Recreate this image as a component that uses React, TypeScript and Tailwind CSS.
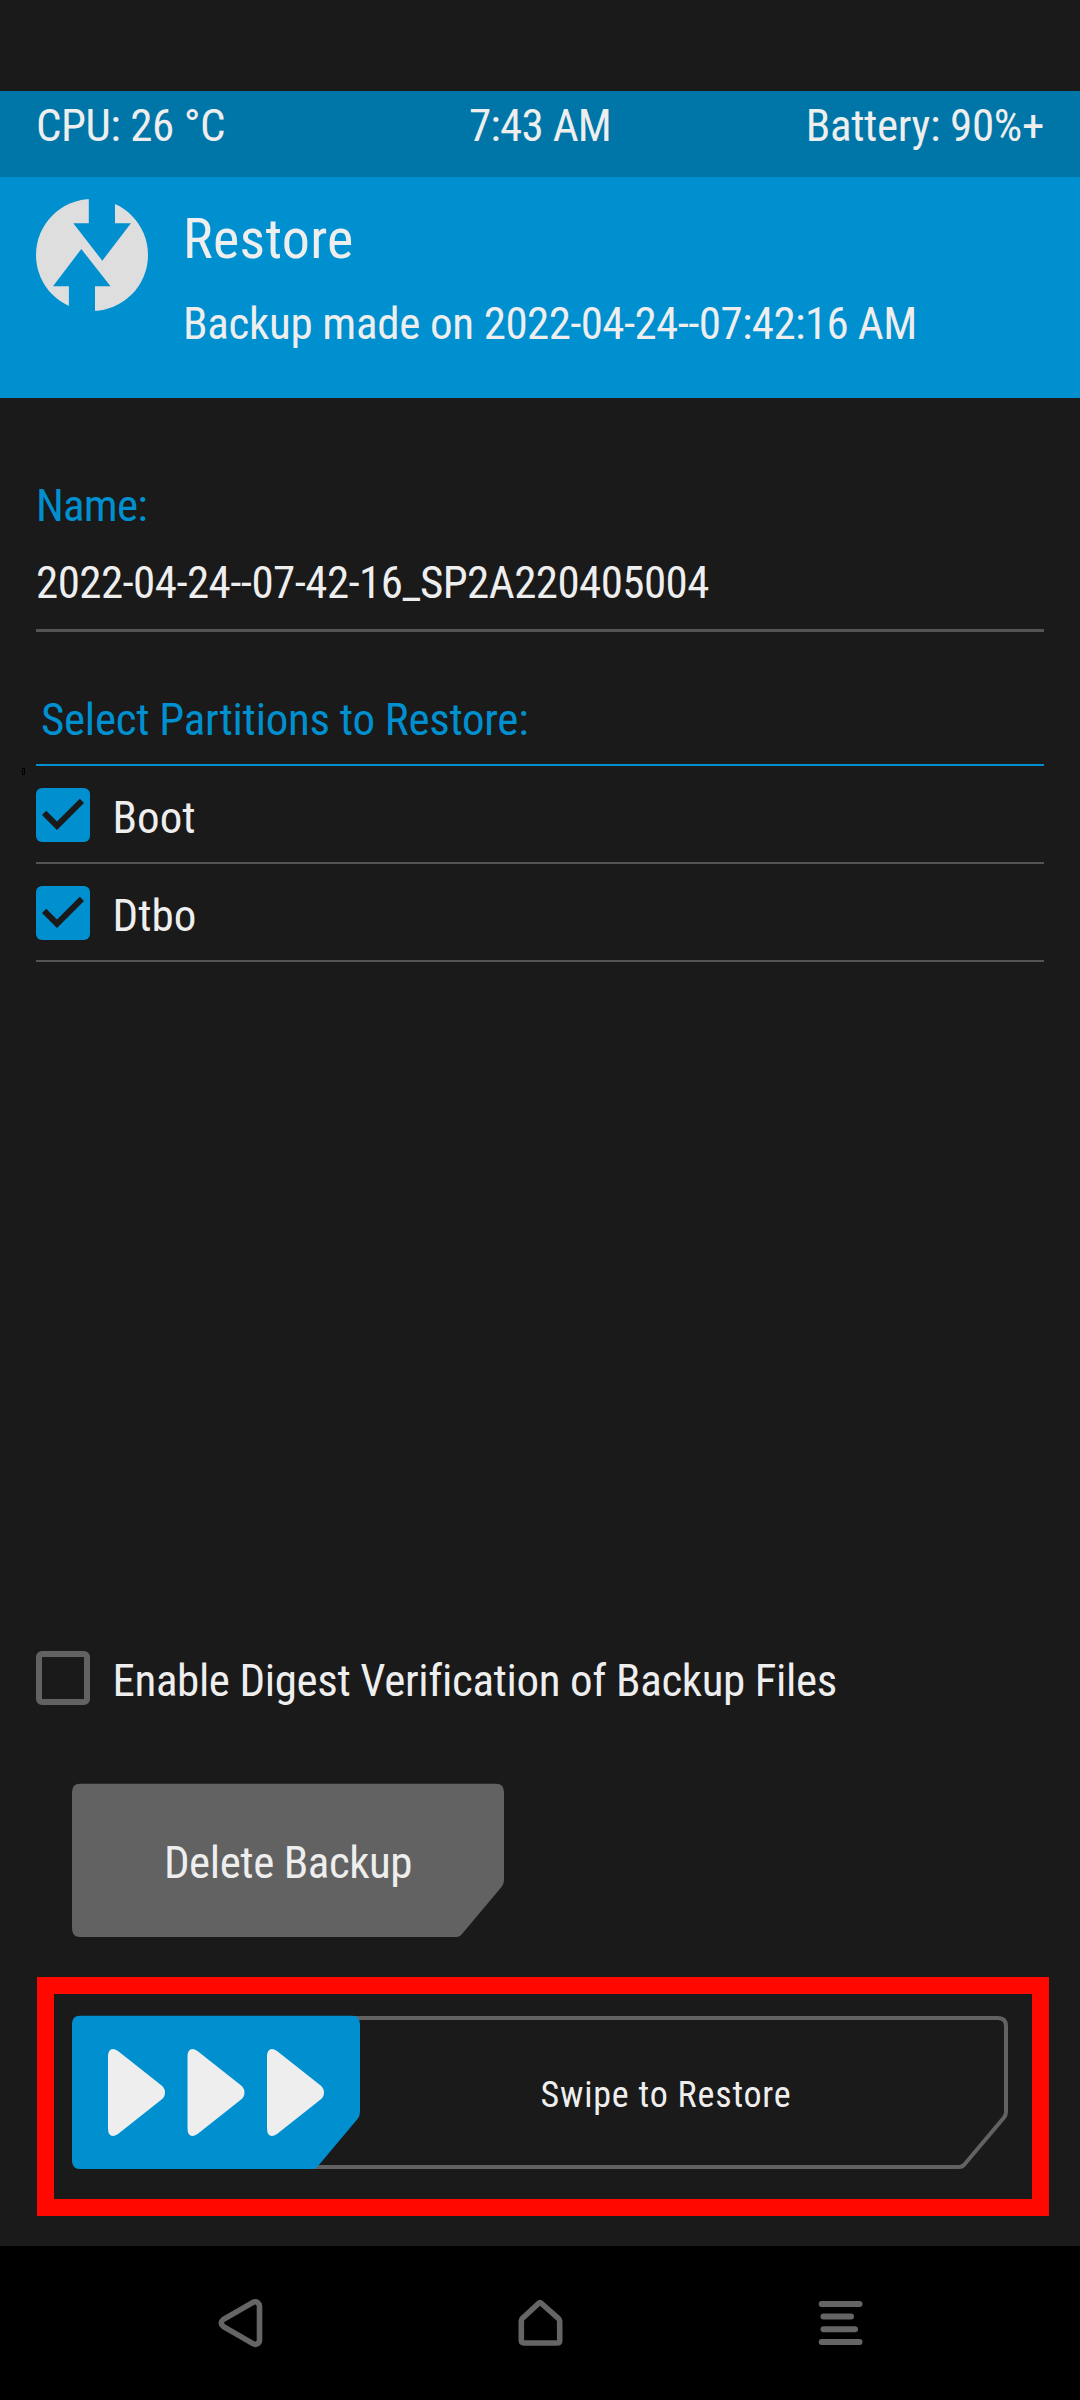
import type { ReactNode } from "react";

function StatusBar() {
  return (
    <div className="flex h-[86px] items-start justify-between bg-[#0076a8] px-9 pt-2 leading-[53px]">
      <span className="w-1/3 tracking-[-0.45px]">CPU: 26 °C</span>
      <span className="tracking-[-0.75px]">7:43 AM</span>
      <span className="w-1/3 text-right tracking-[-0.35px]">Battery: 90%+</span>
    </div>
  );
}

function Logo() {
  return (
    <svg className="mt-[22px] h-28 w-28 shrink-0" viewBox="0 0 112 112">
      <circle cx="56" cy="56" r="56" fill="#dedede" />
      <path
        fill="#0090d0"
        d="M52.8 -1V24.3H37.3L66.3 61.7L94.9 24.3H79V-1ZM32.9 113V87.3H17L45.3 50L74.5 87.3H59V113Z"
      />
    </svg>
  );
}

function Header() {
  return (
    <header className="flex h-[221px] gap-[35px] bg-[#0090d0] px-9">
      <Logo />
      <div className="flex flex-col">
        <h1 className="mt-[29px] text-[56px] leading-[66px] tracking-[0.3px]">Restore</h1>
        <p className="mt-[25px] whitespace-pre leading-[53px]">
          <span className="tracking-[-0.3px]">Backup made on </span>
          <span className="tracking-[-0.62px]">2022-04-24--07:42:16 AM</span>
        </p>
      </div>
    </header>
  );
}

function CheckBox({ checked }: { checked: boolean }) {
  return checked ? (
    <svg className="h-[54px] w-[54px] shrink-0" viewBox="0 0 54 54">
      <rect width="54" height="54" rx="6" fill="#0090d0" />
      <path d="M6 27L10.2 22.8L21 33.6L43.8 10.8L48 15L21 42Z" fill="#1a1a1a" />
    </svg>
  ) : (
    <span className="h-[54px] w-[54px] shrink-0 rounded-[6px] border-[6px] border-[#626262]" />
  );
}

function Option({ checked, children }: { checked: boolean; children: ReactNode }) {
  return (
    <div className="flex h-[54px] gap-[22.5px]">
      <CheckBox checked={checked} />
      <span className="mt-[3px] leading-[53px]">{children}</span>
    </div>
  );
}

function PartitionRow({ name }: { name: string }) {
  return (
    <li className="h-[98px] border-b-2 border-[#545454] pt-[22px]">
      <Option checked>{name}</Option>
    </li>
  );
}

function DeleteButton() {
  return (
    <button className="relative ml-9 mt-[78px] block h-[154px] w-[432px]">
      <svg className="absolute inset-0 h-full w-full" viewBox="0 0 432 154">
        <path
          fill="#626262"
          d="M8 .7H424Q432 .7 432 9V97Q432 101 429.500 104L390 151Q388 154 385 154H8Q0 154 0 145V9Q0 .7 8 .7Z"
        />
      </svg>
      <span className="relative mt-1 block leading-[53px] tracking-[-0.45px]">Delete Backup</span>
    </button>
  );
}

const ARROW = "M36 42Q36 34 41 34Q43 34 46 36L89 70Q93 73 93 77.500Q93 82 89 85L46 119Q43 121 41 121Q36 121 36 113Z";

function Slider() {
  return (
    <div className="ml-px mt-[40px] h-[239px] w-[1012px] border-[17px] border-[#ff0800] pl-[18px] pt-[21px]">
      <div className="relative h-[155px] w-[936px]">
        <svg className="absolute inset-0 h-full w-full" viewBox="0 0 936 155">
          <path
            fill="none"
            stroke="#626262"
            strokeWidth="4"
            d="M10 3H926Q934 3 934 11V97Q934 100 932 102.500L892 150Q890 152 887 152H10Q2 152 2 144V11Q2 3 10 3Z"
          />
          <path
            fill="#0090d0"
            d="M8 .7H280Q288 .7 288 9V97Q288 101 285.500 104L246 151Q244 154 241 154H8Q0 154 0 145V9Q0 .7 8 .7Z"
          />
          <g fill="#eee">
            <path d={ARROW} />
            <path transform="translate(79.500 0)" d={ARROW} />
            <path transform="translate(159 0)" d={ARROW} />
          </g>
        </svg>
        <div className="relative ml-[252px] pt-[59px] text-center text-[36px] leading-[43px] tracking-[0.8px]">
          Swipe to Restore
        </div>
      </div>
    </div>
  );
}

function NavBar() {
  return (
    <nav className="flex h-[154px] items-start justify-between bg-black px-[216px] pt-[52px]">
      <svg className="h-[52px] w-12" viewBox="0 0 48 52" fill="none" stroke="#656565" strokeWidth="5.6" strokeLinejoin="round">
        <path d="M37 4.400Q39.500 3 41.500 4.500Q43.500 6 43.500 8V42Q43.500 44.500 41.500 45.700Q39.500 47 37 45.600L7.500 28.600Q3 25 7.500 21.400Z" />
      </svg>
      <svg className="h-[52px] w-12" viewBox="0 0 48 52" fill="none" stroke="#656565" strokeWidth="5.6" strokeLinejoin="round">
        <path d="M5.300 23Q5.300 21.500 6.500 20.300L22.500 5.500Q24 4 25.500 5.500L42.300 20.300Q43.700 21.500 43.700 23V42.500Q43.700 45 41.200 45H7.800Q5.300 45 5.300 42.500Z" />
      </svg>
      <svg className="h-[52px] w-12" viewBox="0 0 48 52" fill="#656565">
        <rect x="2.700" y="3" width="43.800" height="6" rx="3" />
        <rect x="4.500" y="15.600" width="33.500" height="6" rx="3" />
        <rect x="4.500" y="28.300" width="37.500" height="6" rx="3" />
        <rect x="2.700" y="41" width="43.800" height="6" rx="3" />
      </svg>
    </nav>
  );
}

export default function App() {
  return (
    <div className="flex h-[2400px] w-[1080px] flex-col overflow-hidden bg-[#1a1a1a] pt-[91px] font-['Roboto_Condensed','Roboto',sans-serif] text-[45px] font-normal text-[#eee] font-stretch-condensed">
      <StatusBar />
      <Header />
      <main className="flex-1 px-9">
        <label className="mt-[81px] block leading-[53px] tracking-[-0.8px] text-[#0090d0]">Name:</label>
        <div className="mt-[24px] h-[76px] border-b-3 border-[#545454] leading-[53px] tracking-[-0.58px]">
          2022-04-24--07-42-16_SP2A220405004
        </div>
        <h2 className="mt-[61px] h-[73px] border-b-2 border-[#0090d0] pl-[5px] leading-[53px] tracking-[-0.28px] text-[#0090d0]">
          Select Partitions to Restore:
        </h2>
        <div className="relative h-[885px]">
          <span className="absolute -left-[14px] top-[2px] h-[7px] w-[3px] border border-black" />
          <ul>
            <PartitionRow name="Boot" />
            <PartitionRow name="Dtbo" />
          </ul>
        </div>
        <Option checked={false}>
          <span className="tracking-[-0.38px]">Enable Digest Verification of Backup Files</span>
        </Option>
        <DeleteButton />
        <Slider />
      </main>
      <NavBar />
    </div>
  );
}
